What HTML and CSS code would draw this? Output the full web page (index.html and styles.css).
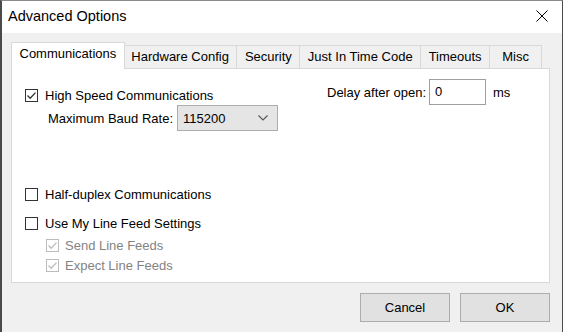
FILE: index.html
```html
<!DOCTYPE html>
<html lang="en">
<head>
  <meta charset="UTF-8">
  <title>Advanced Options</title>
  <link rel="stylesheet" href="styles.css">
</head>
<body>
  <div class="window">
    <div class="titlebar">
      <span class="title">Advanced Options</span>
      <svg class="close" width="12" height="12" viewBox="0 0 12 12">
        <path d="M0.5 0.5 L11.5 11.5 M11.5 0.5 L0.5 11.5" stroke="#000" stroke-width="1" fill="none"/>
      </svg>
    </div>

    <div class="content">
      <div class="tabs">
        <div class="tab active">Communications</div>
        <div class="tab">Hardware Config</div>
        <div class="tab">Security</div>
        <div class="tab">Just In Time Code</div>
        <div class="tab">Timeouts</div>
        <div class="tab misc">Misc</div>
      </div>

      <div class="panel">
        <div class="top">
          <div class="left">
            <div class="check">
              <span class="box"><svg width="13" height="13" viewBox="0 0 13 13"><path d="M2.5 6.5 L5.2 9.2 L10.5 3.6" stroke="#333" stroke-width="1.3" fill="none"/></svg></span>
              High Speed Communications
            </div>
            <div class="baud">
              <span class="baud-label">Maximum Baud Rate:</span>
              <div class="select">
                <span>115200</span>
                <svg width="10" height="6" viewBox="0 0 10 6"><path d="M0.5 0.5 L5 5 L9.5 0.5" stroke="#555" stroke-width="1.1" fill="none"/></svg>
              </div>
            </div>
          </div>
          <div class="delay">
            <span>Delay after open:</span>
            <div class="input">0</div>
            <span class="unit">ms</span>
          </div>
        </div>

        <div class="check half">
          <span class="box"></span>
          Half-duplex Communications
        </div>
        <div class="check linefeed">
          <span class="box"></span>
          Use My Line Feed Settings
        </div>
        <div class="sub">
          <div class="check disabled">
            <span class="box"><svg width="13" height="13" viewBox="0 0 13 13"><path d="M2.5 6.5 L5.2 9.2 L10.5 3.6" stroke="#bcbcbc" stroke-width="1.3" fill="none"/></svg></span>
            Send Line Feeds
          </div>
          <div class="check disabled">
            <span class="box"><svg width="13" height="13" viewBox="0 0 13 13"><path d="M2.5 6.5 L5.2 9.2 L10.5 3.6" stroke="#bcbcbc" stroke-width="1.3" fill="none"/></svg></span>
            Expect Line Feeds
          </div>
        </div>
      </div>

      <div class="buttons">
        <div class="button">Cancel</div>
        <div class="button">OK</div>
      </div>
    </div>
  </div>
</body>
</html>
```

FILE: styles.css
```css
*, *::before, *::after {
  box-sizing: border-box;
}

body {
  margin: 0;
  font-family: "Liberation Sans", Arial, sans-serif;
  font-size: 13px;
  color: #000;
}

.window {
  width: 563px;
  height: 332px;
  display: flex;
  flex-direction: column;
  background-color: #f0f0f0;
  border-top: 1px solid #8a8a8a;
  border-left: 2px solid #4a4a4a;
  border-right: 1px solid #4a4a4a;
  overflow: hidden;
}

.titlebar {
  height: 32px;
  flex: none;
  display: flex;
  align-items: center;
  justify-content: space-between;
  background-color: #fff;
  padding: 0 14px 2px 6px;
}

.title {
  font-size: 14.5px;
}

.close {
  display: block;
}

.content {
  padding: 9px 12px 0 9px;
}

.tabs {
  display: flex;
  align-items: flex-end;
  height: 26px;
  padding-left: 2px;
  position: relative;
  z-index: 1;
}

.tab {
  height: 23px;
  line-height: 22px;
  padding: 0 7.5px;
  background-color: #f0f0f0;
  border: 1px solid #d9d9d9;
  border-bottom: none;
  margin-left: -1px;
  white-space: nowrap;
  text-align: center;
}

.tab:first-child {
  margin-left: 0;
}

.tab.misc {
  min-width: 53px;
}

.tab.active {
  height: 27px;
  line-height: 22px;
  padding-bottom: 4px;
  margin: 0 -2px -1px -2px;
  background-color: #fff;
  position: relative;
  z-index: 2;
}

.tab.active + .tab {
  margin-left: 0;
}

.panel {
  height: 215px;
  background-color: #fff;
  border: 1px solid #d9d9d9;
  padding: 10px 0 0 13px;
}

.top {
  display: flex;
  align-items: flex-start;
}

.left {
  width: 302px;
  flex: none;
}

.check {
  height: 20px;
  display: flex;
  align-items: center;
  white-space: nowrap;
}

.left .check {
  margin-top: 6px;
}

.box {
  width: 13px;
  height: 13px;
  flex: none;
  border: 1px solid #333;
  background-color: #fff;
  margin-right: 7px;
  position: relative;
}

.box svg {
  position: absolute;
  left: -1px;
  top: -1px;
}

.baud {
  display: flex;
  align-items: center;
  padding-left: 23px;
}

.baud-label {
  width: 129px;
  flex: none;
  white-space: nowrap;
}

.select {
  width: 101px;
  height: 26px;
  display: flex;
  align-items: center;
  justify-content: space-between;
  padding: 0 9px 0 5px;
  background-color: #e5e5e5;
  border: 1px solid #adadad;
}

.delay {
  display: flex;
  align-items: center;
  white-space: nowrap;
}

.input {
  width: 57px;
  height: 26px;
  line-height: 24px;
  margin-left: 3px;
  padding-left: 5px;
  border: 1px solid #a0a0a0;
  background-color: #fff;
}

.unit {
  margin-left: 7px;
}

.half {
  margin-top: 53px;
}

.linefeed {
  margin-top: 9px;
}

.sub {
  padding-left: 21px;
  margin-top: 2px;
}

.disabled {
  color: #838383;
}

.disabled .box {
  border-color: #bcbcbc;
  margin-right: 6px;
}

.buttons {
  display: flex;
  justify-content: flex-end;
  gap: 10px;
  margin-top: 10px;
}

.button {
  width: 90px;
  height: 29px;
  display: flex;
  align-items: center;
  justify-content: center;
  background-color: #e1e1e1;
  border: 1px solid #adadad;
}
```
